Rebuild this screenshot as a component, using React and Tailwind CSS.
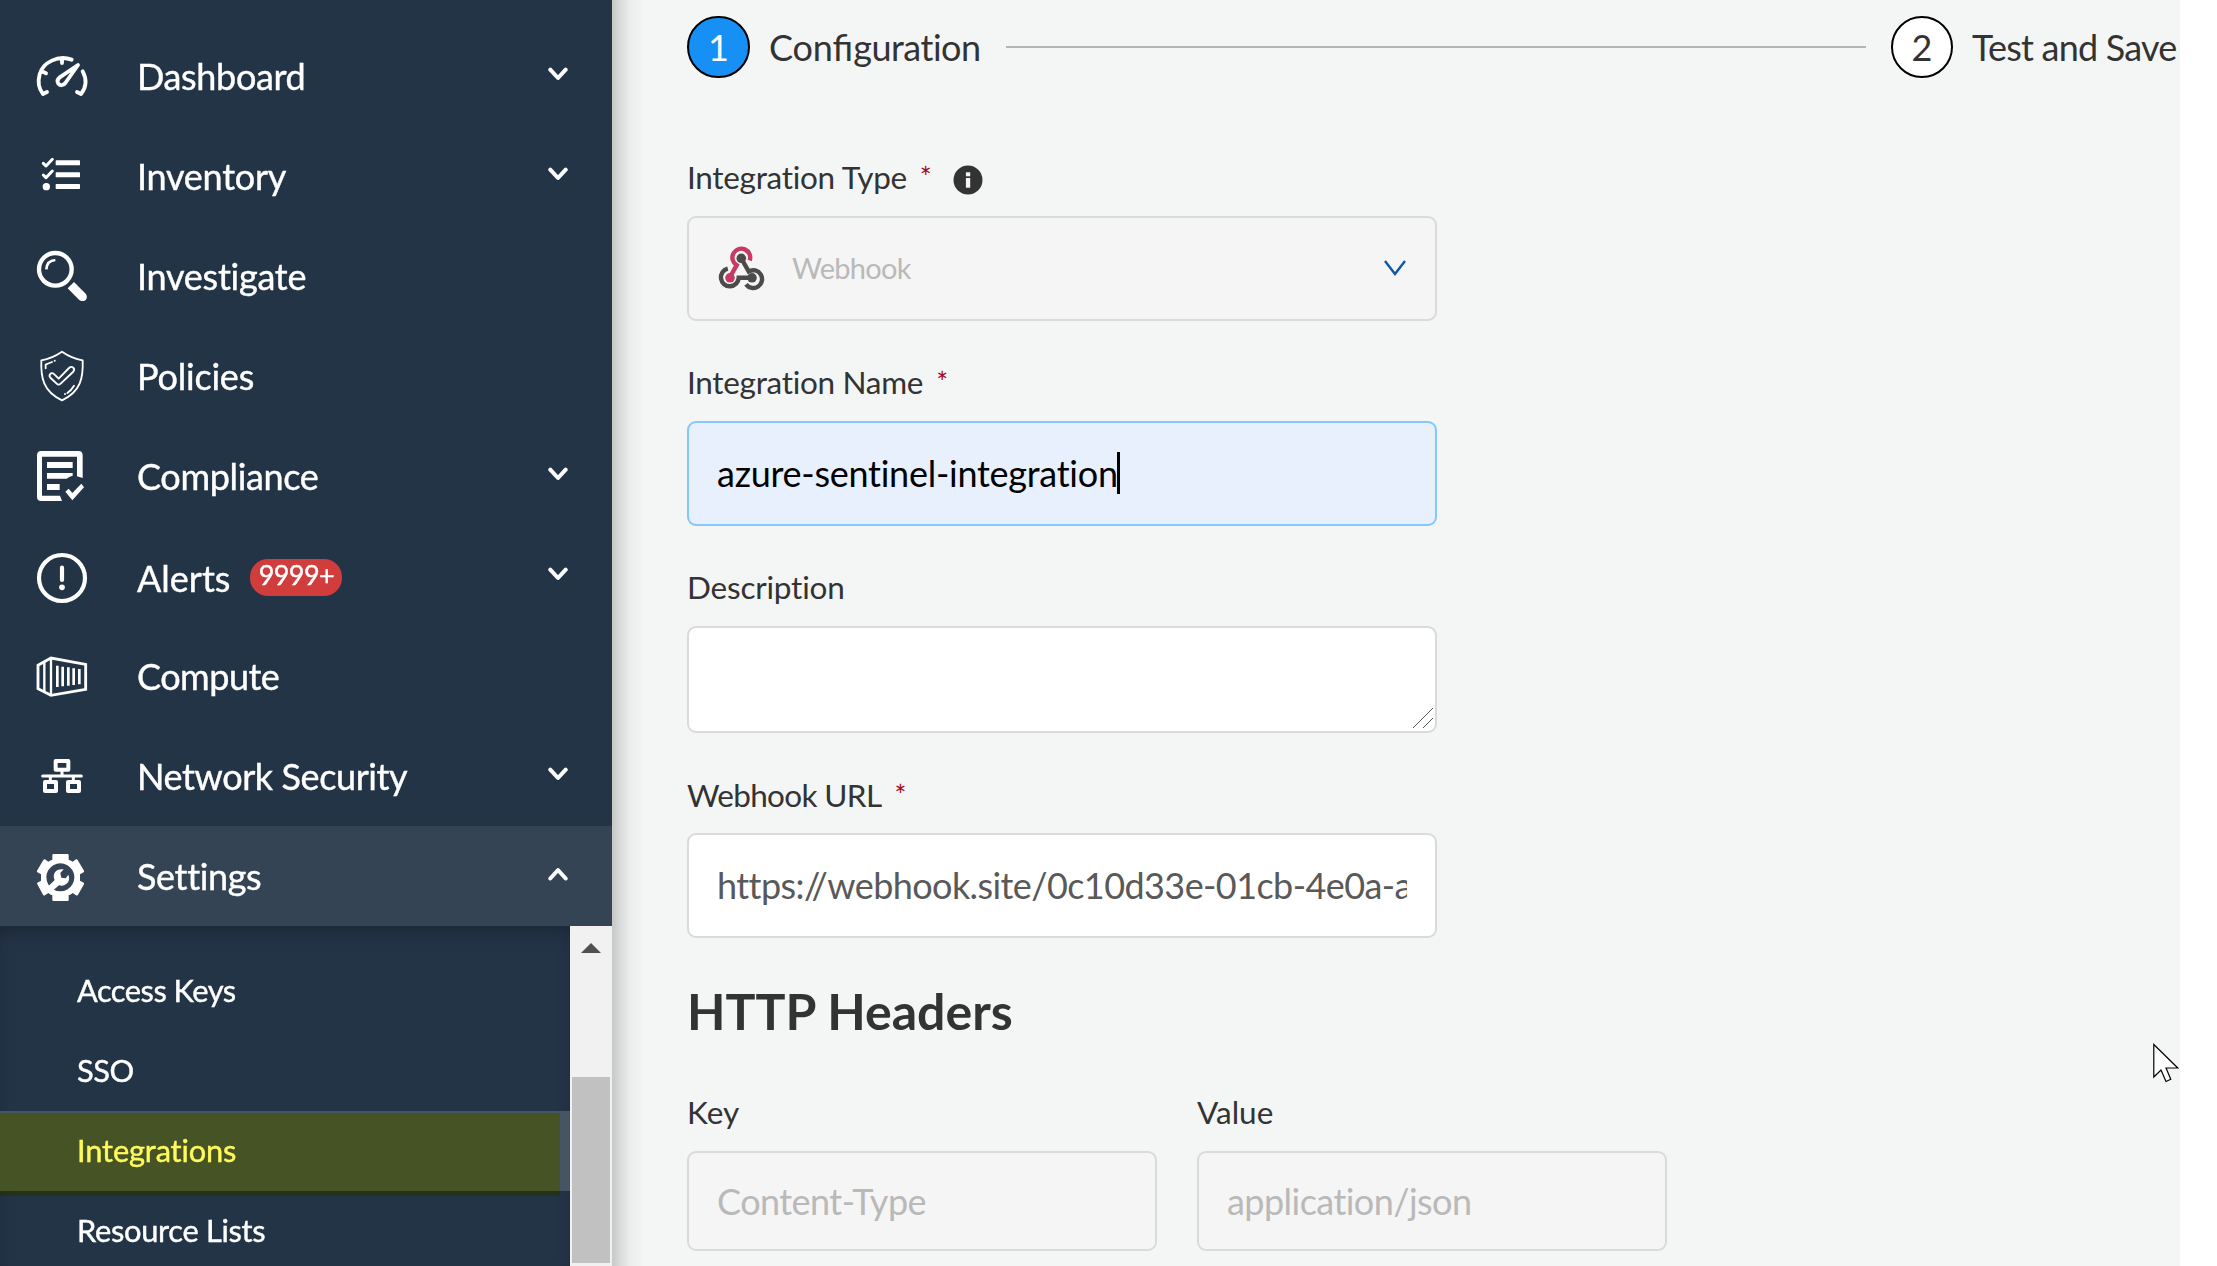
import React from "react";

const NavSvg = ({ viewBox, children }) => (
  <svg viewBox={viewBox} className="h-[60px] w-[60px] shrink-0" fill="none" stroke="white" strokeLinecap="round" strokeLinejoin="round">
    {children}
  </svg>
);

const DashboardIcon = () => (
  <NavSvg viewBox="36 18 180 180">
    <g strokeWidth="11.5">
      <path d="M155 59C115 44 68 67 59 103C53 125 56 146 69 162L81 156M126 55V69M65 94L78 100" />
      <path d="M188 94C201 118 198 143 183 162L171 156" />
      <path d="M174 75L136 129C130 137 120 138 115 131C111 125 112 118 118 113Z" />
    </g>
  </NavSvg>
);

const InventoryIcon = () => (
  <NavSvg viewBox="36 318 180 180">
    <path d="M70 370L78 378L97 358M70 405L78 413L97 393" strokeWidth="9" />
    <circle cx="79" cy="440" r="11" fill="white" stroke="none" />
    <g fill="white" stroke="none">
      <rect x="107" y="361" width="73" height="15" rx="2" />
      <rect x="107" y="397" width="73" height="15" rx="2" />
      <rect x="107" y="432" width="73" height="15" rx="2" />
    </g>
  </NavSvg>
);

const InvestigateIcon = () => (
  <NavSvg viewBox="36 618 180 180">
    <circle cx="106" cy="688" r="49" strokeWidth="13" />
    <path d="M79 688C80 671 90 661 106 660" strokeWidth="8" strokeLinecap="butt" />
    <path d="M162 726L197 761C208 775 192 791 177 779L143 745Z" fill="white" stroke="none" />
  </NavSvg>
);

const PoliciesIcon = () => (
  <NavSvg viewBox="36 918 180 180">
    <path d="M126 935C107 948 86 957 64 961C62 1012 69 1055 126 1081C183 1055 190 1012 188 961C166 957 145 948 126 935Z" strokeWidth="5.5" />
    <path d="M90 1003C94 998 99 999 103 1003L116 1016L147 984C156 976 168 986 159 996L122 1031C118 1035 114 1035 110 1031L92 1014C88 1010 87 1007 90 1003Z" strokeWidth="5.5" />
    <path d="M77 985V974C83 971 90 968 96 966M162 1037C156 1047 150 1054 142 1059" strokeWidth="5.5" />
    <circle cx="104" cy="962" r="3" fill="white" stroke="none" />
    <circle cx="135" cy="1062" r="3" fill="white" stroke="none" />
  </NavSvg>
);

const ComplianceIcon = () => (
  <NavSvg viewBox="36 1218 180 180">
    <g fill="white" stroke="none">
      <path d="M64 1233H175Q188 1233 188 1246V1314L171 1309V1250H66V1367H120L126 1383H64Q51 1383 51 1370V1246Q51 1233 64 1233Z" />
      <path d="M81 1266H158V1284H81ZM81 1299H158V1307Q149 1308 140 1316H81ZM81 1332H119V1350H81Z" />
      <path d="M136 1355L146 1346L157 1359L184 1331L192 1342L157 1381Z" />
    </g>
  </NavSvg>
);

const AlertsIcon = () => (
  <NavSvg viewBox="36 198 180 180">
    <circle cx="126" cy="294" r="69" strokeWidth="12.5" />
    <path d="M126 263V300" strokeWidth="12.5" />
    <circle cx="126" cy="322" r="8.5" fill="white" stroke="none" />
  </NavSvg>
);

const ComputeIcon = () => (
  <NavSvg viewBox="36 498 180 180">
    <g strokeLinecap="butt" strokeLinejoin="miter">
      <path d="M54 556L93 534L197 553V628L93 646L54 626Z" strokeWidth="8.5" />
      <path d="M93 534V646M73 546V634" strokeWidth="7" />
      <path d="M112 557V621M128 560V619M145 562V617M161 565V615M178 567V613" strokeWidth="8" />
    </g>
  </NavSvg>
);

const NetworkIcon = () => (
  <NavSvg viewBox="36 798 180 180">
    <g strokeWidth="12">
      <rect x="107" y="843" width="38" height="26" />
      <rect x="75" y="906" width="33" height="27" />
      <rect x="144" y="906" width="33" height="27" />
    </g>
    <path d="M68 888H184M126 874V888M91 888V901M160 888V901" strokeWidth="9" />
  </NavSvg>
);

const SettingsIcon = () => (
  <NavSvg viewBox="36 1098 180 180">
    <path
      fill="white"
      stroke="none"
      fillRule="evenodd"
      d="M100 1122H143Q146 1122 146 1126V1139Q152 1141 158 1145L168 1138Q171 1137 173 1140L192 1172Q193 1175 191 1177L180 1183V1202L191 1208Q193 1210 192 1213L174 1244Q171 1248 168 1246L158 1239Q152 1244 146 1246V1259Q146 1263 143 1263H100Q97 1263 97 1259V1246Q91 1244 85 1239L75 1246Q72 1248 69 1244L52 1213Q50 1210 52 1208L63 1202V1183L52 1177Q50 1175 51 1172L70 1140Q72 1137 75 1138L85 1145Q91 1141 97 1139V1126Q97 1122 100 1122ZM121 1150A42 42 0 1 0 121.1 1150Z"
    />
    <path d="M82 1222L104 1200C95 1180 110 1164 131 1168L121 1179L124 1193L137 1195L145 1184C154 1205 136 1221 117 1216L100 1231Z" fill="white" stroke="none" />
  </NavSvg>
);

const Chevron = ({ up }) => (
  <svg viewBox="0 0 20 14" className="mr-[44.5px] -mt-1 h-[14px] w-5" fill="none" stroke="white" strokeWidth="4" strokeLinecap="round" strokeLinejoin="round">
    <path d={up ? "M2.3 11.5L10 3L17.7 11.5" : "M2.3 2.7L10 11L17.7 2.7"} />
  </svg>
);

const nav = [
  { label: "Dashboard", Icon: DashboardIcon, arrow: true, tracking: "tracking-[-0.35px]" },
  { label: "Inventory", Icon: InventoryIcon, arrow: true, tracking: "tracking-[-0.25px]" },
  { label: "Investigate", Icon: InvestigateIcon, tracking: "tracking-[-0.25px]" },
  { label: "Policies", Icon: PoliciesIcon, tracking: "tracking-[-0.2px]" },
  { label: "Compliance", Icon: ComplianceIcon, arrow: true, tracking: "tracking-[-0.35px]" },
  { label: "Alerts", Icon: AlertsIcon, arrow: true, badge: "9999+", tracking: "mt-1" },
  { label: "Compute", Icon: ComputeIcon, tracking: "tracking-[-0.5px]" },
  { label: "Network Security", Icon: NetworkIcon, arrow: true, tracking: "tracking-[-0.4px]" },
  { label: "Settings", Icon: SettingsIcon, arrow: true, active: true, tracking: "tracking-[-0.35px]" },
];

const NavRow = ({ label, Icon, arrow, badge, active, tracking }) => (
  <div className={`flex h-[100px] shrink-0 items-center pl-8 text-[36px] leading-[44px] text-white ${active ? "bg-[#344454]" : ""}`}>
    <Icon />
    <span className={`ml-[45px] ${tracking}`}>{label}</span>
    {badge && (
      <span className="ml-5 mt-[3px] flex h-[37px] w-[92px] justify-center rounded-[18px] bg-[#d13d3d] text-[27px] leading-[32px] tracking-[-0.6px]">{badge}</span>
    )}
    <span className="flex-1" />
    {arrow && <Chevron up={active} />}
  </div>
);

const Sidebar = () => (
  <aside className="relative z-10 flex h-full w-[612px] shrink-0 flex-col bg-[#243447] pt-[26px] [-webkit-text-stroke:0.4px_currentColor]">
    <span className="absolute left-full top-0 h-full w-8 bg-[linear-gradient(to_right,rgba(0,0,0,0.19),rgba(0,0,0,0.1)_28%,rgba(0,0,0,0.035)_55%,transparent)]" />
    {nav.map((n) => (
      <NavRow key={n.label} {...n} />
    ))}
    <div className="flex min-h-0 flex-1">
      <ul className="w-[570px] pt-[25px] text-[30.8px] leading-[80px] tracking-[-0.5px] text-white shadow-[inset_0_10px_20px_-6px_rgba(0,0,0,0.3)]">
        <li className="h-20 pl-[77px]">Access Keys</li>
        <li className="h-20 pl-[77px]">SSO</li>
        <li className="relative h-20 bg-[#465464] pl-[77px] tracking-[-0.15px]">
          Integrations
          <span className="absolute left-0 top-[2px] h-[83px] w-[560px] bg-[#fffa5c] mix-blend-multiply" />
        </li>
        <li className="h-20 pl-[77px] tracking-[-0.3px]">Resource Lists</li>
      </ul>
      <div className="flex w-[42px] flex-col items-center bg-[#f1f1f1] pt-[17px]">
        <svg viewBox="0 0 20 10" className="h-[10px] w-5 shrink-0">
          <path d="M10 0L20 10H0Z" fill="#505050" />
        </svg>
        <div className="mt-[124px] h-[186px] w-[38px] bg-[#c1c1c1]" />
      </div>
    </div>
  </aside>
);

const Label = ({ children, required, className = "", tracking = "tracking-[-0.3px]" }) => (
  <div className={`flex h-[38px] items-center text-[31.5px] leading-[38px] text-[#333333] ${className}`}>
    <span className={tracking}>{children}</span>
    {required && <span className="ml-[13px] text-[28px] text-[#a8071a]">*</span>}
  </div>
);

const Info = () => (
  <svg viewBox="0 0 30 30" className="ml-[21px] mt-[7px] h-[30px] w-[30px]">
    <circle cx="15" cy="15" r="14.5" fill="#333333" />
    <rect x="12.9" y="7.3" width="4.3" height="4" fill="#f4f6f5" />
    <rect x="12.9" y="13" width="4.3" height="9.7" fill="#f4f6f5" />
  </svg>
);

const WebhookLogo = () => (
  <svg viewBox="0 0 44 42" className="h-[42px] w-[44px] overflow-visible" fill="none" strokeWidth="4.4">
    <path d="M30.7 13.5A8.9 8.9 0 1 0 17.7 18.2L11 30" stroke="#c73a63" />
    <circle cx="11" cy="30.8" r="4.8" fill="#c73a63" />
    <path d="M8.8 21.7A8.9 8.9 0 1 0 19.7 30.8H33" stroke="#4b4b4b" />
    <path d="M22 11L29.7 24.4A8.9 8.9 0 1 1 27 37.4" stroke="#4b4b4b" />
    <circle cx="22.3" cy="11.3" r="4.8" fill="#4b4b4b" />
    <circle cx="33" cy="30.8" r="4.8" fill="#4b4b4b" />
  </svg>
);

const Field = ({ className = "", children }) => (
  <div className={`flex items-center rounded-[9px] border-2 px-7 pb-px text-[36px] leading-[44px] ${className}`}>{children}</div>
);

const Step = ({ n, label, active }) => (
  <div className="flex shrink-0 items-center text-[36px] leading-[44px]">
    <span className={`flex h-[62px] items-center justify-center rounded-full border-2 border-black ${active ? "w-[63px] bg-[#1690f5] text-white" : "w-[62px] bg-white text-[#333333]"}`}>{n}</span>
    <span className={`ml-[19px] whitespace-nowrap text-[#333333] ${active ? "tracking-[-0.5px]" : "tracking-[-0.8px]"}`}>{label}</span>
  </div>
);

export default function App() {
  return (
    <div className="flex h-[1266px] w-[2217px] overflow-hidden bg-white font-['Lato',sans-serif] [font-variant-ligatures:none]">
      <Sidebar />
      <main className="h-full w-[1568px] overflow-hidden bg-[#f4f6f5] pl-[75px] pt-4">
        <div className="flex h-[62px] items-center">
          <div className="flex w-[319px]">
            <Step n="1" label={<><span className="tracking-[-0.2px]">Con<span className="tracking-normal [font-variant-ligatures:common-ligatures]">fi</span></span>guration</>} active />
          </div>
          <span className="mr-[25px] h-[2px] w-[860px] bg-[#b4b6b5]" />
          <Step n="2" label="Test and Save" />
        </div>

        <div className="mt-20 flex">
          <Label required>Integration Type</Label>
          <Info />
        </div>
        <Field className="mt-5 h-[105px] w-[750px] border-[#d9dbda] bg-[#f5f5f5]">
          <span className="ml-[2px]"><WebhookLogo /></span>
          <span className="-mt-px ml-[29px] flex-1 text-[29px] tracking-[-0.7px] text-[#b9b9b9]">Webhook</span>
          <svg viewBox="0 0 22 16" className="mr-px h-4 w-[22px]" fill="none" stroke="#0b57a8" strokeWidth="2.4">
            <path d="M1 1L11 14L21 1" />
          </svg>
        </Field>

        <Label required className="mt-[42px]">Integration Name</Label>
        <Field className="mt-5 h-[105px] w-[750px] border-[#84c7fd] bg-[#e8effd] text-black">
          <span className="tracking-[-0.26px]">azure-sentinel-integration</span>
          <span className="-ml-px h-[42px] w-[3px] bg-black" />
        </Field>

        <Label className="mt-[42px]" tracking="tracking-[-0.2px]">Description</Label>
        <div className="mt-5 flex h-[107px] w-[750px] items-end justify-end rounded-[9px] border-2 border-[#d9dbda] bg-white">
          <svg viewBox="0 0 22 22" className="mb-[2px] mr-[1px] h-[22px] w-[22px]" fill="none" stroke="#555555" strokeWidth="1">
            <path d="M1 21L21 1M11 21L21 11" />
          </svg>
        </div>

        <Label required className="mt-[43px]" tracking="tracking-[-0.65px]">Webhook URL</Label>
        <Field className="mt-[19px] h-[105px] w-[750px] border-[#d9dbda] bg-white text-[#595959]">
          <span className="overflow-hidden whitespace-nowrap tracking-[-0.58px]">https://webhook.site/0c10d33e-01cb-4e0a-a</span>
        </Field>

        <h2 className="mt-[43px] text-[50px] font-bold leading-[60px] text-[#333333]">HTTP Headers</h2>

        <div className="mt-[52px] flex gap-10">
          {[["Key", "Content-Type"], ["Value", "application/json"]].map(([k, v]) => (
            <div key={k} className="w-[470px]">
              <Label tracking="tracking-normal">{k}</Label>
              <Field className="mt-5 h-[100px] w-full border-[#d9dbda] bg-[#f5f5f5] tracking-[-0.55px] text-[#b9b9b9]">{v}</Field>
            </div>
          ))}
        </div>
      </main>
      <svg viewBox="0 0 26 40" className="absolute left-[2153px] top-[1043px] h-10 w-[26px]" fill="white" stroke="black" strokeWidth="1.2">
        <path d="M0.8 1.5V34L8 27L13 38.5L17.8 36.3L13 25H24.8Z" />
      </svg>
    </div>
  );
}
